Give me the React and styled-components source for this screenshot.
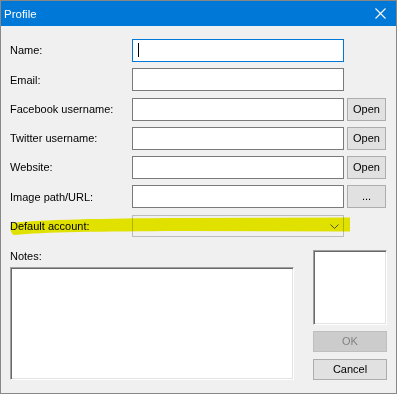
import React from "react";
import styled, { createGlobalStyle } from "styled-components";

const GlobalStyle = createGlobalStyle`
  html, body {
    margin: 0;
    padding: 0;
    background: #f0f0f0;
  }
  body {
    font-family: "Liberation Sans", Arial, sans-serif;
    font-size: 11px;
  }
`;

const Window = styled.div`
  position: relative;
  width: 397px;
  height: 394px;
  box-sizing: border-box;
  border: 1px solid #888888;
  background: #f0f0f0;
  display: flex;
  flex-direction: column;
`;

const TitleBar = styled.div`
  height: 25px;
  background: #0078d7;
  color: #fff;
  display: flex;
  align-items: center;
  justify-content: space-between;
  padding: 0 10px 0 3px;
  font-size: 11.5px;
`;

const CloseIcon = styled.svg`
  width: 11px;
  height: 11px;
  margin-bottom: 1px;
`;

const Body = styled.div`
  display: flex;
  flex-direction: column;
  padding: 13px 0 0 9px;
`;

const Form = styled.div`
  display: grid;
  grid-template-columns: 119px 212px 39px;
  grid-template-rows: 23px 24px 23px 23px 23px 24px 22px;
  column-gap: 3px;
  row-gap: 6px;
`;

const Label = styled.label`
  grid-column: 1;
  min-width: 0;
  align-self: center;
  color: #000;
  white-space: nowrap;
  margin-top: -1px;
`;

const TextInput = styled.div`
  grid-column: 2;
  height: 23px;
  box-sizing: border-box;
  background: #fff;
  border: 1px solid ${(p) => (p.focused ? "#0078d7" : "#7a7a7a")};
  position: relative;
`;

const Caret = styled.span`
  position: absolute;
  left: 5px;
  top: 3px;
  width: 1px;
  height: 14px;
  background: #000;
`;

const Button = styled.div`
  height: ${(p) => p.h || 23}px;
  box-sizing: border-box;
  background: ${(p) => (p.disabled ? "#cccccc" : "#e1e1e1")};
  border: 1px solid ${(p) => (p.disabled ? "#bfbfbf" : "#adadad")};
  color: ${(p) => (p.disabled ? "#838383" : "#000")};
  display: flex;
  align-items: center;
  justify-content: center;
  padding-bottom: 1px;
`;

const SideButton = styled(Button)`
  grid-column: 3;
`;

const Combo = styled.div`
  grid-column: 2;
  height: 22px;
  box-sizing: border-box;
  background: #f0f0f0;
  border: 1px solid #bcbcbc;
  display: flex;
  align-items: center;
  justify-content: flex-end;
  padding-right: 4px;
`;

const Chevron = styled.svg`
  width: 9px;
  height: 5px;
`;

const Bottom = styled.div`
  display: flex;
  margin-top: 13px;
  gap: 19px;
`;

const NotesColumn = styled.div`
  width: 284px;
  display: flex;
  flex-direction: column;
`;

const NotesLabel = styled.div`
  height: 15px;
  margin-bottom: 2px;
`;

const Sunken = styled.div`
  box-sizing: border-box;
  background: #fff;
  border: 1px solid;
  border-color: #a0a0a0 #ffffff #ffffff #a0a0a0;
  box-shadow: inset 1px 1px #696969, inset -1px -1px #e3e3e3;
`;

const Notes = styled(Sunken)`
  height: 113px;
`;

const SideColumn = styled.div`
  width: 74px;
  display: flex;
  flex-direction: column;
`;

const ImageBox = styled(Sunken)`
  height: 75px;
  margin-bottom: 6px;
`;

const Highlight = styled.svg`
  position: absolute;
  left: 0;
  top: 0;
  width: 397px;
  height: 394px;
  pointer-events: none;
  mix-blend-mode: multiply;
`;

const rows = [
  { label: "Name:", focused: true },
  { label: "Email:" },
  { label: "Facebook username:", button: "Open" },
  { label: "Twitter username:", button: "Open" },
  { label: "Website:", button: "Open" },
  { label: "Image path/URL:", button: "..." },
];

export default function App() {
  return (
    <>
      <GlobalStyle />
      <Window>
        <TitleBar>
          <span>Profile</span>
          <CloseIcon viewBox="0 0 11 11">
            <path d="M0.5 0.5 L10.5 10.5 M10.5 0.5 L0.5 10.5" stroke="#fff" strokeWidth="1.1" fill="none" />
          </CloseIcon>
        </TitleBar>
        <Body>
          <Form>
            {rows.map((r, i) => (
              <React.Fragment key={r.label}>
                <Label style={{ gridRow: i + 1 }}>{r.label}</Label>
                <TextInput focused={r.focused} style={{ gridRow: i + 1 }}>
                  {r.focused && <Caret />}
                </TextInput>
                {r.button && <SideButton style={{ gridRow: i + 1 }}>{r.button}</SideButton>}
              </React.Fragment>
            ))}
            <Label style={{ gridRow: 7 }}>Default account:</Label>
            <Combo style={{ gridRow: 7 }}>
              <Chevron viewBox="0 0 9 5">
                <path d="M0.5 0.5 L4.5 4.5 L8.5 0.5" stroke="#555" strokeWidth="1" fill="none" />
              </Chevron>
            </Combo>
          </Form>
          <Bottom>
            <NotesColumn>
              <NotesLabel>Notes:</NotesLabel>
              <Notes />
            </NotesColumn>
            <SideColumn>
              <ImageBox />
              <Button disabled h={21}>OK</Button>
              <Button h={21} style={{ marginTop: 7 }}>Cancel</Button>
            </SideColumn>
          </Bottom>
        </Body>
        <Highlight viewBox="0 0 397 394">
          <path
            d="M12 222 C40 218.5, 100 217.5, 180 217 L349 216.5 L349 230.5 L180 230 C100 230.5, 40 231, 14 234 C9 234, 8 223, 12 222 Z"
            fill="#f0f000"
          />
        </Highlight>
      </Window>
    </>
  );
}
